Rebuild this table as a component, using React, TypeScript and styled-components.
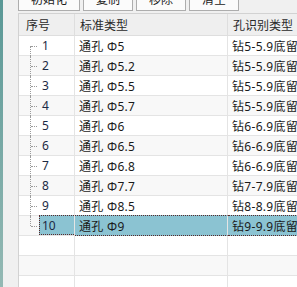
import styled, { createGlobalStyle, css } from "styled-components";

const GlobalStyle = createGlobalStyle`
  html, body {
    margin: 0;
    padding: 0;
    background: #f0f0f0;
    overflow: hidden;
  }
  body {
    font-family: "Noto Sans", "Noto Sans CJK SC", sans-serif;
    font-size: 12px;
    color: #1a1a1a;
  }
`;

const Window = styled.div`
  display: flex;
  height: 287px;
  width: 297px;
  overflow: hidden;
`;

const SideStrip = styled.div`
  background: linear-gradient(#5a9896, #94b9b4);
  flex: 0 0 3px;
`;

const Content = styled.div`
  display: flex;
  flex: 1;
  flex-direction: column;
  min-width: 0;
  padding-left: 15px;
`;

const Toolbar = styled.div`
  display: flex;
  gap: 3px;
  margin-top: -13px;
`;

const ToolButton = styled.button<{ $width: number }>`
  background: #fbfbfb;
  border: 1px solid #adadad;
  color: #1a1a1a;
  font-family: inherit;
  font-size: 12px;
  height: 24px;
  padding: 0;
  width: ${(p) => p.$width}px;
`;

const Grid = styled.div`
  background: #fff;
  border: 1px solid #d2d2d2;
  border-right: none;
  display: grid;
  grid-auto-rows: 20px;
  grid-template-columns: 56px 153px 120px;
  grid-template-rows: 22px;
  margin-top: 2px;
  width: 330px;
`;

const HeadCell = styled.div<{ $pad: number }>`
  align-items: center;
  background: #efefef;
  border-bottom: 1px solid #dedede;
  border-right: 1px solid #dedede;
  color: #2a2a2a;
  display: flex;
  padding-left: ${(p) => p.$pad}px;
  white-space: nowrap;
`;

const Cell = styled.div<{ $alt: boolean; $selected?: boolean; $last?: boolean }>`
  align-items: center;
  background: ${(p) => (p.$alt ? "#f8f8f8" : "#fff")};
  border-bottom: 1px solid #e4e4e4;
  border-right: 1px solid #e4e4e4;
  display: flex;
  letter-spacing: 0.3px;
  overflow: hidden;
  padding-left: 4px;
  white-space: nowrap;
  ${(p) =>
    p.$selected &&
    css`
      background: #8bc3d2;
      border-bottom: 1px dotted #5a2a2a;
      border-top: 1px dotted #5a2a2a;
      margin-top: -1px;
    `}
  ${(p) =>
    p.$selected &&
    p.$last &&
    css`
      border-right: 1px dotted #5a2a2a;
    `}
`;

const IndexCell = styled.div<{ $alt: boolean }>`
  background: ${(p) => (p.$alt ? "#f8f8f8" : "#fff")};
  border-bottom: 1px solid #e4e4e4;
  border-right: 1px solid #e4e4e4;
  display: flex;
`;

const Gutter = styled.div<{ $first: boolean; $last: boolean }>`
  flex: 0 0 20px;
  position: relative;

  &::before {
    border-left: 1px dotted #9a9a9a;
    bottom: ${(p) => (p.$last ? "50%" : "-1px")};
    content: "";
    left: 11px;
    position: absolute;
    top: ${(p) => (p.$first ? "50%" : "0")};
  }

  &::after {
    border-top: 1px dotted #9a9a9a;
    content: "";
    left: 12px;
    position: absolute;
    top: 50%;
    width: 6px;
  }
`;

const IndexLabel = styled.div<{ $selected: boolean }>`
  align-items: center;
  color: #1c2a44;
  display: flex;
  flex: 1;
  padding-left: 3px;
  ${(p) =>
    p.$selected &&
    css`
      background: #8bc3d2;
      border: 1px dotted #5a2a2a;
      border-right: none;
      margin-top: -1px;
      padding-left: 2px;
    `}
`;

const buttons = [
  { label: "初始化", width: 62 },
  { label: "复制", width: 50 },
  { label: "移除", width: 50 },
  { label: "清空", width: 50 },
];

const rows = [
  ["通孔 Φ5", "钻5-5.9底留孔"],
  ["通孔 Φ5.2", "钻5-5.9底留孔"],
  ["通孔 Φ5.5", "钻5-5.9底留孔"],
  ["通孔 Φ5.7", "钻5-5.9底留孔"],
  ["通孔 Φ6", "钻6-6.9底留孔"],
  ["通孔 Φ6.5", "钻6-6.9底留孔"],
  ["通孔 Φ6.8", "钻6-6.9底留孔"],
  ["通孔 Φ7.7", "钻7-7.9底留孔"],
  ["通孔 Φ8.5", "钻8-8.9底留孔"],
  ["通孔 Φ9", "钻9-9.9底留孔"],
];

const SELECTED = 9;

export default function App() {
  return (
    <>
      <GlobalStyle />
      <Window>
        <SideStrip />
        <Content>
          <Toolbar>
            {buttons.map((b) => (
              <ToolButton key={b.label} $width={b.width}>
                {b.label}
              </ToolButton>
            ))}
          </Toolbar>
          <Grid>
            <HeadCell $pad={7}>序号</HeadCell>
            <HeadCell $pad={5}>标准类型</HeadCell>
            <HeadCell $pad={5}>孔识别类型</HeadCell>
            {rows.map(([type, hole], i) => {
              const alt = i % 2 === 1;
              const sel = i === SELECTED;
              return [
                <IndexCell key={`n${i}`} $alt={alt}>
                  <Gutter $first={i === 0} $last={i === rows.length - 1} />
                  <IndexLabel $selected={sel}>{i + 1}</IndexLabel>
                </IndexCell>,
                <Cell key={`t${i}`} $alt={alt} $selected={sel}>
                  {type}
                </Cell>,
                <Cell key={`h${i}`} $alt={alt} $selected={sel} $last>
                  {hole}
                </Cell>,
              ];
            })}
            {[10, 11, 12].map((i) => {
              const alt = i % 2 === 1;
              return [
                <IndexCell key={`n${i}`} $alt={alt} />,
                <Cell key={`t${i}`} $alt={alt} />,
                <Cell key={`h${i}`} $alt={alt} />,
              ];
            })}
          </Grid>
        </Content>
      </Window>
    </>
  );
}
